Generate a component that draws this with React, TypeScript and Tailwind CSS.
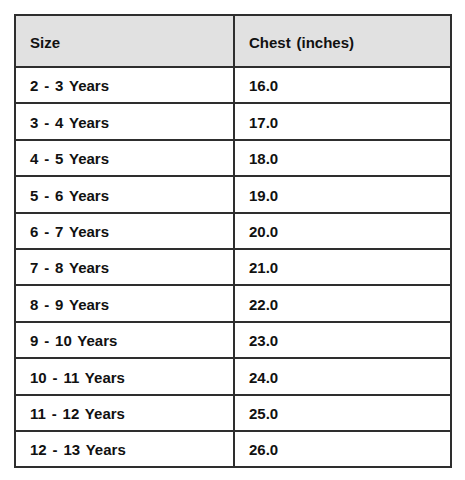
const rows: [string, string][] = [
  ["2 - 3 Years", "16.0"],
  ["3 - 4 Years", "17.0"],
  ["4 - 5 Years", "18.0"],
  ["5 - 6 Years", "19.0"],
  ["6 - 7 Years", "20.0"],
  ["7 - 8 Years", "21.0"],
  ["8 - 9 Years", "22.0"],
  ["9 - 10 Years", "23.0"],
  ["10 - 11 Years", "24.0"],
  ["11 - 12 Years", "25.0"],
  ["12 - 13 Years", "26.0"],
];

const cell =
  "border-2 border-[#2e2e2e] pl-[14px] text-left text-[15px] font-bold [word-spacing:1.7px]";

export default function App() {
  return (
    <div className="w-[465px] h-[480px] bg-white pt-[14px] pl-[14px] font-['Liberation_Sans',Arial,sans-serif] text-[#111]">
      <table className="w-[438px] border-collapse border-2 border-[#2e2e2e] table-fixed">
        <thead>
          <tr className="bg-[#e1e1e1]">
            <th className={`w-[219px] h-[52px] pt-[5px] ${cell}`}>Size</th>
            <th className={`h-[52px] pt-[5px] ${cell}`}>Chest (inches)</th>
          </tr>
        </thead>
        <tbody>
          {rows.map(([size, chest]) => (
            <tr key={size}>
              <td className={`h-[36.4px] pt-[3px] ${cell}`}>{size}</td>
              <td className={`h-[36.4px] pt-[3px] ${cell}`}>{chest}</td>
            </tr>
          ))}
        </tbody>
      </table>
    </div>
  );
}
